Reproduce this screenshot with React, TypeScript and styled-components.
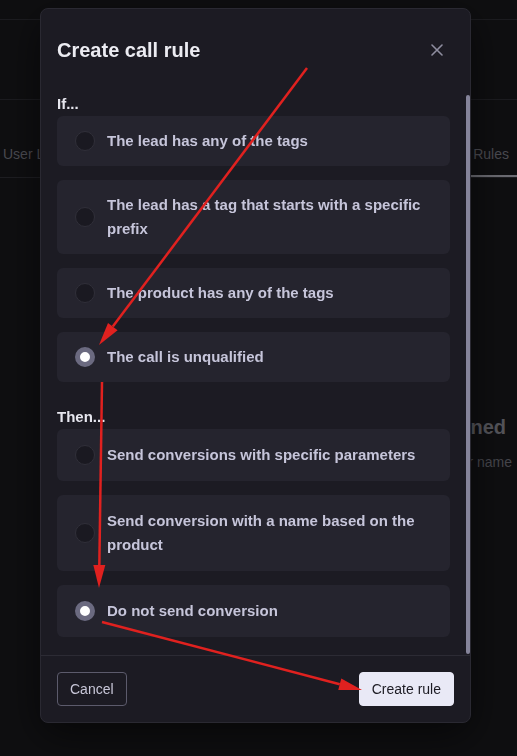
import styled, { createGlobalStyle } from "styled-components";

const GlobalStyle = createGlobalStyle`
  html, body {
    margin: 0;
    padding: 0;
    background: #0f0f11;
    font-family: "Liberation Sans", Arial, sans-serif;
  }
  * { box-sizing: border-box; }
`;

const Page = styled.div`
  width: 517px;
  height: 756px;
  overflow: hidden;
  background: #0f0f11;
`;

const TopBar = styled.div`
  height: 20px;
  border-bottom: 1px solid #1c1c20;
`;

const SubBar = styled.div`
  height: 80px;
  border-bottom: 1px solid #1c1c20;
`;

const Tabs = styled.div`
  height: 78px;
  display: flex;
  justify-content: space-between;
  align-items: flex-end;
  border-bottom: 1px solid #1e1e22;
`;

const Tab = styled.div<{ $active?: boolean }>`
  font-size: 14px;
  line-height: 20px;
  color: #4b4b52;
  padding: 0 8px 11px ${(p) => (p.$active ? "2px" : "3px")};
  border-bottom: 2px solid ${(p) => (p.$active ? "#6c6c73" : "transparent")};
  white-space: nowrap;
`;

const Empty = styled.div`
  display: flex;
  flex-direction: column;
  align-items: flex-end;
  padding: 236px 5px 0 0;
`;

const EmptyTitle = styled.div`
  font-size: 20px;
  font-weight: 700;
  line-height: 26px;
  color: #55555b;
  margin-right: 6px;
`;

const EmptyText = styled.div`
  font-size: 14px;
  line-height: 20px;
  color: #46464c;
  margin-top: 12px;
`;

const Dialog = styled.div`
  position: fixed;
  left: 40px;
  top: 8px;
  width: 431px;
  height: 715px;
  background: #1c1b23;
  border: 1px solid #2a2932;
  border-radius: 8px;
  box-shadow: 0 12px 40px rgba(0, 0, 0, 0.55);
  display: flex;
  flex-direction: column;
  overflow: hidden;
`;

const Header = styled.div`
  height: 83px;
  padding: 25px 21px 0 16px;
  display: flex;
  justify-content: space-between;
  align-items: flex-start;
`;

const Title = styled.h2`
  margin: 0;
  font-size: 20px;
  line-height: 32px;
  font-weight: 700;
  color: #ececf2;
`;

const Close = styled.button`
  width: 24px;
  height: 32px;
  padding: 0;
  border: 0;
  background: none;
  color: #8e8d9f;
  display: flex;
  align-items: center;
  justify-content: center;
  cursor: pointer;
`;

const Body = styled.div`
  flex: 1;
  display: flex;
  min-height: 0;
`;

const Content = styled.div`
  flex: 1;
  padding: 2px 16px 0;
`;

const ScrollTrack = styled.div`
  width: 4px;
  padding: 3px 0 1px;
  display: flex;
`;

const ScrollThumb = styled.div`
  flex: 1;
  border-radius: 2px;
  background: #85849a;
`;

const Section = styled.div`
  display: flex;
  flex-direction: column;
  gap: 14px;
  & + & {
    margin-top: 25px;
  }
`;

const Label = styled.div`
  font-size: 15px;
  line-height: 20px;
  font-weight: 700;
  color: #e6e6ee;
  margin-bottom: -12px;
`;

const Option = styled.label<{ $pad: number }>`
  display: flex;
  align-items: center;
  gap: 12px;
  padding: ${(p) => p.$pad}px 18px;
  background: #25242e;
  border-radius: 6px;
  cursor: pointer;
`;

const Radio = styled.span<{ $checked?: boolean }>`
  flex: none;
  width: 20px;
  height: 20px;
  border-radius: 50%;
  background: ${(p) => (p.$checked ? "#ffffff" : "#1a1921")};
  border: ${(p) => (p.$checked ? "5px solid #6b6a80" : "1px solid #302f39")};
`;

const OptionText = styled.span`
  font-size: 15px;
  line-height: 24px;
  font-weight: 700;
  color: #c6c5da;
`;

const Footer = styled.div`
  border-top: 1px solid #2c2b34;
  padding: 16px;
  display: flex;
  justify-content: space-between;
`;

const Button = styled.button<{ $primary?: boolean }>`
  height: 34px;
  padding: 0 12px;
  border-radius: 4px;
  font-family: "Liberation Sans", Arial, sans-serif;
  font-size: 14px;
  cursor: pointer;
  color: ${(p) => (p.$primary ? "#1c1b23" : "#c8c7d8")};
  background: ${(p) => (p.$primary ? "#e9e9f6" : "transparent")};
  border: 1px solid ${(p) => (p.$primary ? "#e9e9f6" : "#5c5b6c")};
`;

const Annotations = styled.svg`
  position: fixed;
  left: 0;
  top: 0;
  pointer-events: none;
`;

type Pt = [number, number];

function Arrow({ from, to }: { from: Pt; to: Pt }) {
  const dx = to[0] - from[0];
  const dy = to[1] - from[1];
  const len = Math.hypot(dx, dy);
  const ux = dx / len;
  const uy = dy / len;
  const bx = to[0] - ux * 23;
  const by = to[1] - uy * 23;
  const nx = -uy * 6;
  const ny = ux * 6;
  return (
    <g>
      <line x1={from[0]} y1={from[1]} x2={bx} y2={by} stroke="#e0211f" strokeWidth={2.5} />
      <polygon
        points={`${to[0]},${to[1]} ${bx + nx},${by + ny} ${bx - nx},${by - ny}`}
        fill="#e0211f"
      />
    </g>
  );
}

type Choice = { text: string; checked?: boolean };

const ifOptions: Choice[] = [
  { text: "The lead has any of the tags" },
  { text: "The lead has a tag that starts with a specific prefix" },
  { text: "The product has any of the tags" },
  { text: "The call is unqualified", checked: true },
];

const thenOptions: Choice[] = [
  { text: "Send conversions with specific parameters" },
  { text: "Send conversion with a name based on the product" },
  { text: "Do not send conversion", checked: true },
];

function Group({ label, options, pad }: { label: string; options: Choice[]; pad: number }) {
  return (
    <Section>
      <Label>{label}</Label>
      {options.map((o) => (
        <Option key={o.text} $pad={pad}>
          <Radio $checked={o.checked} />
          <OptionText>{o.text}</OptionText>
        </Option>
      ))}
    </Section>
  );
}

export default function App() {
  return (
    <>
      <GlobalStyle />
      <Page>
        <TopBar />
        <SubBar />
        <Tabs>
          <Tab>User Lists</Tab>
          <Tab $active>Rules</Tab>
        </Tabs>
        <Empty>
          <EmptyTitle>No rules assigned</EmptyTitle>
          <EmptyText>or user name</EmptyText>
        </Empty>
      </Page>

      <Dialog>
        <Header>
          <Title>Create call rule</Title>
          <Close aria-label="Close">
            <svg width="12" height="12" viewBox="0 0 12 12">
              <path d="M1 1L11 11M11 1L1 11" stroke="currentColor" strokeWidth="1.6" strokeLinecap="round" />
            </svg>
          </Close>
        </Header>
        <Body>
          <Content>
            <Group label="If..." options={ifOptions} pad={13} />
            <Group label="Then..." options={thenOptions} pad={14} />
          </Content>
          <ScrollTrack>
            <ScrollThumb />
          </ScrollTrack>
        </Body>
        <Footer>
          <Button>Cancel</Button>
          <Button $primary>Create rule</Button>
        </Footer>
      </Dialog>

      <Annotations width="517" height="756" viewBox="0 0 517 756">
        <Arrow from={[307, 68]} to={[99, 345]} />
        <Arrow from={[102, 382]} to={[99, 588]} />
        <Arrow from={[102, 622]} to={[362, 690]} />
      </Annotations>
    </>
  );
}
